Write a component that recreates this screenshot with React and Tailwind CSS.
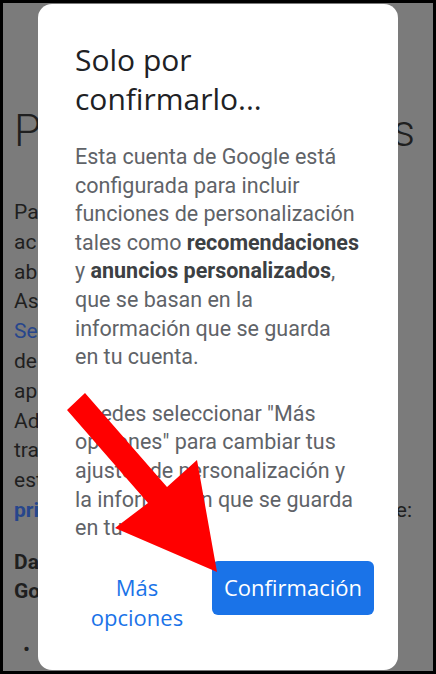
import React from 'react';

const bgLines = [
  { left: 'Pa', right: '' },
  { left: 'ac', right: '' },
  { left: 'ab', right: '' },
  { left: 'As', right: '' },
  { left: 'Se', right: '', link: true },
  { left: 'de', right: '' },
  { left: 'ap', right: '' },
  { left: 'Ad', right: '' },
  { left: 'tra', right: '' },
  { left: 'est', right: '' },
  { left: 'pri', right: 'e:', link: true, bold: true },
];

const App = () => {
  return (
    <div className="w-[436px] h-[674px] bg-black p-[3px] relative" style={{ fontFamily: 'Roboto, "Noto Sans", sans-serif' }}>
      <div className="relative w-full h-full bg-[#7b7b7b] overflow-hidden">
        {/* page behind the dialog */}
        <div className="px-[11px] pt-[102px] text-[#1f1f1f]">
          <div className="flex justify-between text-[44px] leading-[52px] font-light">
            <span>P</span>
            <span className="pr-[7px]">es</span>
          </div>
          <div className="mt-[41px] text-[21px] leading-[29.8px]">
            {bgLines.map((l, i) => (
              <div key={i} className="flex justify-between whitespace-nowrap">
                <span className={(l.link ? 'text-[#27468c] ' : '') + (l.bold ? 'font-bold' : '')}>{l.left}</span>
                <span className="pr-[10px]">{l.right}</span>
              </div>
            ))}
          </div>
          <div className="mt-[22px] text-[21px] leading-[29px] font-bold whitespace-nowrap">
            <div>Da</div>
            <div>Go</div>
          </div>
          <div className="mt-[29px] pl-[9px] text-[21px] leading-[29px]">•</div>
        </div>

        {/* dialog */}
        <div className="absolute left-[35px] top-[1px] w-[360px] h-[666px] bg-white rounded-[14px] pl-[37px] pr-[21px] pt-[36px]">
          <h2 className="text-[30px] leading-[39px] text-[#202124]" style={{ fontFamily: '"Open Sans", Roboto, sans-serif' }}>
            Solo por<br />confirmarlo...
          </h2>
          <p className="mt-[25px] text-[21.5px] leading-[28.6px] text-[#5f6368] whitespace-nowrap">
            Esta cuenta de Google está<br />
            configurada para incluir<br />
            funciones de personalización<br />
            tales como <b className="text-[#3c4043]">recomendaciones</b><br />
            y <b className="text-[#3c4043]">anuncios personalizados</b>,<br />
            que se basan en la<br />
            información que se guarda<br />
            en tu cuenta.
          </p>
          <p className="mt-[28px] text-[21.5px] leading-[28.6px] text-[#5f6368] whitespace-nowrap">
            Puedes seleccionar "Más<br />
            opciones" para cambiar tus<br />
            ajustes de personalización y<br />
            la información que se guarda<br />
            en tu cuenta.
          </p>
          <div className="mt-[18px] flex justify-end items-start gap-[19px] pr-[3px]" style={{ fontFamily: '"Open Sans", Roboto, sans-serif' }}>
            <button className="w-[112px] py-[11px] text-[22px] leading-[30px] font-medium text-[#1a73e8] text-center">
              Más<br />opciones
            </button>
            <button className="w-[162px] h-[54px] rounded-[6px] bg-[#1a73e8] text-white text-[22px] font-medium">
              Confirmación
            </button>
          </div>
        </div>
      </div>

      {/* red arrow annotation */}
      <svg className="absolute inset-0 pointer-events-none" width="436" height="674" viewBox="0 0 436 674">
        <polygon points="67,410 85,393 167,487 197,460 217,572 115,528 148,503" fill="#ff0000" />
      </svg>
    </div>
  );
};

export default App;
